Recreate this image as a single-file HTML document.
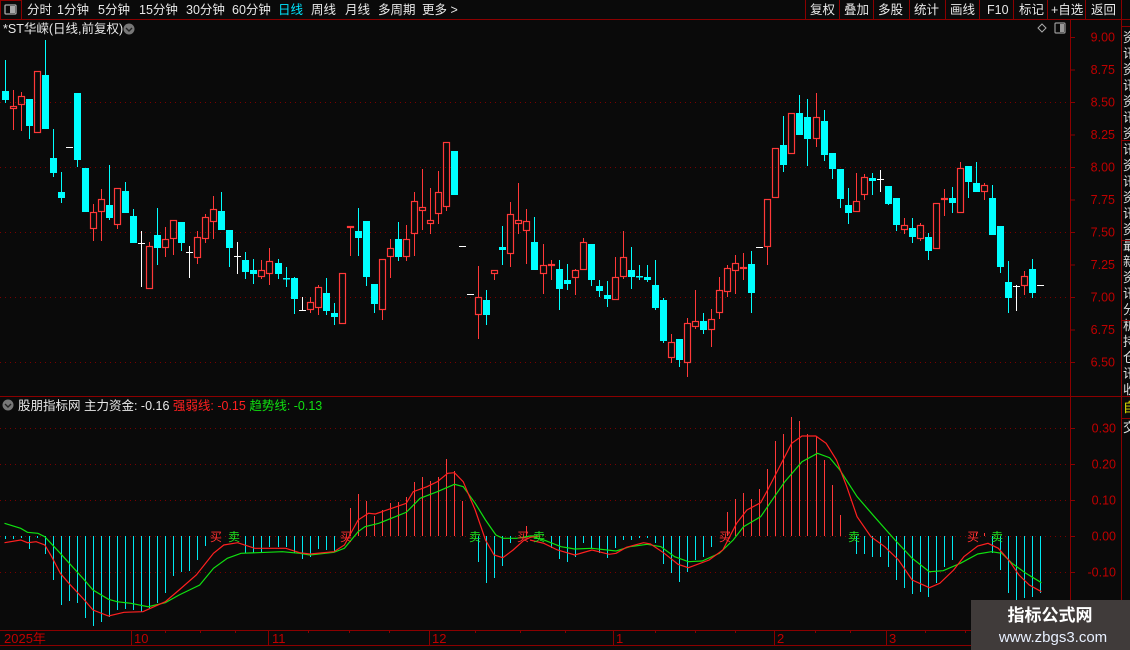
<!DOCTYPE html>
<html><head><meta charset="utf-8">
<style>
html,body{margin:0;padding:0;background:#0a0a0a;width:1130px;height:650px;overflow:hidden}
svg{display:block}
text{font-family:"Liberation Sans","Noto Sans CJK SC",sans-serif}
</style></head>
<body>
<svg id="s" width="1130" height="650" xmlns="http://www.w3.org/2000/svg">
<rect width="1130" height="650" fill="#0a0a0a"/>
<line x1="0" y1="19.5" x2="1130" y2="19.5" stroke="#8b0000"/>
<rect x="0.5" y="0.5" width="21" height="19" fill="none" stroke="#8b0000"/>
<rect x="5" y="5" width="11" height="9" fill="none" stroke="#aaa" stroke-width="1.3" rx="1"/>
<rect x="10" y="6" width="5" height="7" fill="#aaa"/>
<g font-size="12.5" fill="#e8e8e8">
<text x="27" y="14">分时</text><text x="57" y="14">1分钟</text><text x="98" y="14">5分钟</text>
<text x="139" y="14">15分钟</text><text x="186" y="14">30分钟</text><text x="232" y="14">60分钟</text>
<text x="278" y="14" fill="#00e5ff">日线</text><text x="311" y="14">周线</text><text x="345" y="14">月线</text>
<text x="378" y="14">多周期</text><text x="422" y="14">更多 &gt;</text>
<text x="810" y="14">复权</text><text x="844" y="14">叠加</text><text x="878" y="14">多股</text>
<text x="914" y="14">统计</text><text x="950" y="14">画线</text><text x="987" y="14">F10</text>
<text x="1019" y="14">标记</text><text x="1051" y="14">+自选</text><text x="1091" y="14">返回</text>
</g>
<g stroke="#8b0000"><line x1="805.5" y1="0" x2="805.5" y2="19"/><line x1="839.5" y1="0" x2="839.5" y2="19"/><line x1="873.5" y1="0" x2="873.5" y2="19"/><line x1="909.5" y1="0" x2="909.5" y2="19"/><line x1="945.5" y1="0" x2="945.5" y2="19"/><line x1="979.5" y1="0" x2="979.5" y2="19"/><line x1="1013.5" y1="0" x2="1013.5" y2="19"/><line x1="1047.5" y1="0" x2="1047.5" y2="19"/><line x1="1085.5" y1="0" x2="1085.5" y2="19"/><line x1="1121.5" y1="0" x2="1121.5" y2="19"/></g>
<text x="3" y="33" font-size="12.5" fill="#e8e8e8">*ST华嵘(日线,前复权)</text>
<circle cx="129" cy="29" r="5.5" fill="#777"/><path d="M126 28l3 3 3-3" stroke="#222" fill="none" stroke-width="1.4"/>
<path d="M1042 24l4 4-4 4-4-4z" fill="none" stroke="#aaa"/>
<rect x="1055" y="23" width="10" height="10" fill="none" stroke="#999" stroke-width="1.2" rx="1"/><rect x="1060" y="24" width="4" height="8" fill="#999"/>
<line x1="1070.5" y1="20" x2="1070.5" y2="645" stroke="#8b0000"/>
<line x1="1121.5" y1="20" x2="1121.5" y2="645" stroke="#8b0000"/>
<line x1="0" y1="396.5" x2="1121" y2="396.5" stroke="#8b0000"/>
<line x1="0" y1="630.5" x2="1130" y2="630.5" stroke="#8b0000"/>
<line x1="0" y1="645.5" x2="1130" y2="645.5" stroke="#8b0000"/>
<g id="grid"></g>
<g id="cd"></g>
<g id="ind"></g>
<circle cx="8" cy="405" r="5.5" fill="#777"/><path d="M5 404l3 3 3-3" stroke="#222" fill="none" stroke-width="1.4"/>
<text x="18" y="410" font-size="12.5" fill="#e8e8e8">股朋指标网 主力资金: -0.16 <tspan fill="#ff2020">强弱线: -0.15</tspan> <tspan fill="#10e010">趋势线: -0.13</tspan></text>
<g font-size="13" fill="#c00000">
<text x="4" y="643">2025年</text><text x="134" y="643">10</text><text x="272" y="643">11</text>
<text x="432" y="643">12</text><text x="616" y="643">1</text><text x="777" y="643">2</text><text x="889" y="643">3</text>
</g>
<g stroke="#8b0000"><line x1="131.5" y1="630" x2="131.5" y2="645"/><line x1="268.5" y1="630" x2="268.5" y2="645"/><line x1="429.5" y1="630" x2="429.5" y2="645"/><line x1="613.5" y1="630" x2="613.5" y2="645"/><line x1="774.5" y1="630" x2="774.5" y2="645"/><line x1="886.5" y1="630" x2="886.5" y2="645"/>
<line x1="165.5" y1="630" x2="165.5" y2="633"/><line x1="200.5" y1="630" x2="200.5" y2="633"/><line x1="235.5" y1="630" x2="235.5" y2="633"/><line x1="308.5" y1="630" x2="308.5" y2="633"/><line x1="349.5" y1="630" x2="349.5" y2="633"/><line x1="389.5" y1="630" x2="389.5" y2="633"/><line x1="475.5" y1="630" x2="475.5" y2="633"/><line x1="520.5" y1="630" x2="520.5" y2="633"/><line x1="565.5" y1="630" x2="565.5" y2="633"/><line x1="655.5" y1="630" x2="655.5" y2="633"/><line x1="695.5" y1="630" x2="695.5" y2="633"/><line x1="735.5" y1="630" x2="735.5" y2="633"/><line x1="815.5" y1="630" x2="815.5" y2="633"/><line x1="850.5" y1="630" x2="850.5" y2="633"/><line x1="925.5" y1="630" x2="925.5" y2="633"/><line x1="965.5" y1="630" x2="965.5" y2="633"/></g>
<g font-size="13" fill="#ddd">
<text x="1123" y="42">资</text><text x="1123" y="58">讯</text><text x="1123" y="74">资</text><text x="1123" y="90">讯</text><text x="1123" y="106">资</text><text x="1123" y="122">讯</text><text x="1123" y="138">资</text><text x="1123" y="154">讯</text><text x="1123" y="170">资</text><text x="1123" y="186">讯</text><text x="1123" y="202">资</text><text x="1123" y="218">讯</text><text x="1123" y="234">资</text><text x="1123" y="250">最</text><text x="1123" y="266">新</text><text x="1123" y="282">资</text><text x="1123" y="298">讯</text><text x="1123" y="314">分</text><text x="1123" y="330">析</text><text x="1123" y="346">持</text><text x="1123" y="362">仓</text><text x="1123" y="378">讯</text><text x="1123" y="394">收</text>
<text x="1123" y="412" fill="#e0e000">自</text><text x="1123" y="432">交</text>
</g>
<g stroke="#8b0000"><line x1="1121" y1="26.5" x2="1130" y2="26.5"/><line x1="1121" y1="140.5" x2="1130" y2="140.5"/><line x1="1121" y1="240.5" x2="1130" y2="240.5"/><line x1="1121" y1="320.5" x2="1130" y2="320.5"/><line x1="1121" y1="396.5" x2="1130" y2="396.5"/><line x1="1121" y1="418.5" x2="1130" y2="418.5"/></g>
<rect x="971" y="600" width="159" height="50" fill="#403b3a"/>
<text x="1050" y="621" font-size="17" font-weight="bold" fill="#fff" text-anchor="middle">指标公式网</text>
<text x="1053" y="642" font-size="15" fill="#e8f0ff" text-anchor="middle">www.zbgs3.com</text>
</svg>
<script>
var NS="http://www.w3.org/2000/svg";
function el(p,t,a){var e=document.createElementNS(NS,t);for(var k in a)e.setAttribute(k,a[k]);p.appendChild(e);return e;}
var g=document.getElementById('grid');
[102,167,232,297,362].forEach(function(y){el(g,'line',{x1:0,y1:y+.5,x2:1070,y2:y+.5,stroke:'#7a0000','stroke-dasharray':'1 4'});});
[428,464,500,536,572].forEach(function(y){el(g,'line',{x1:0,y1:y+.5,x2:1070,y2:y+.5,stroke:'#7a0000','stroke-dasharray':'1 4'});});
var pl=['9.00','8.75','8.50','8.25','8.00','7.75','7.50','7.25','7.00','6.75','6.50'];
pl.forEach(function(t,i){var y=37+i*32.5;el(g,'line',{x1:1070,y1:y+.5,x2:1075,y2:y+.5,stroke:'#8b0000'});var tx=el(g,'text',{x:1115,y:y+4.5,'font-size':'12.5',fill:'#c00000','text-anchor':'end'});tx.textContent=t;});
['0.30','0.20','0.10','0.00','-0.10'].forEach(function(t,i){var y=428+i*36;el(g,'line',{x1:1070,y1:y+.5,x2:1075,y2:y+.5,stroke:'#8b0000'});var tx=el(g,'text',{x:1116,y:y+4.5,'font-size':'12.5',fill:'#c00000','text-anchor':'end'});tx.textContent=t;});
var C=[['c',91,100,60,103],['r',106,109,90,130],['r',96,105,92,131],['c',99,126,99,139],['r',71,133],['c',75,129,40,129],['c',158,173,129,177],['c',192,198,172,203],['w',147,147],['c',93,160,93,167],
['c',168,212],['r',212,229,204,241],['r',199,212,189,241],['c',205,218,165,220],['r',188,225,188,229],['c',191,213,182,213],['c',216,243,209,243],['w',243,243,231,286],['r',246,289,242,289],['c',235,248,208,265],
['r',239,248,227,257],['r',220,239,220,255],['c',222,243,222,251],['w',252,252,246,277],['r',237,258,231,264],['r',217,239,214,243],['r',209,222,196,239],['c',211,230,192,230],['c',230,248,230,267],['w',256,256,242,273],
['c',260,272,252,279],['c',270,274,259,284],['r',270,277,260,279],['r',261,274,248,285],['c',263,274,259,279],['c',278,279,267,287],['c',278,299,277,314],['w',310,310,297,310],['r',302,310,297,313],['r',287,308,285,315],
['c',293,311,278,315],['c',313,317,303,325],['r',273,324],['r',226,228,226,256],['c',231,238,208,256],['c',221,277,221,286],['c',284,304,284,313],['r',259,310,259,320],['r',248,257,239,278],['c',239,257,222,261],
['r',239,257,225,261],['r',201,234,192,256],['r',207,211,169,230],['r',220,224,188,234],['r',192,214,171,224],['r',142,207,142,211],['c',151,195],['w',246,246],['w',294,294],['r',297,315,266,339],
['c',300,315,290,325],['r',270,274,270,280],['c',247,250,226,265],['r',214,254,202,267],['r',220,224,183,234],['r',221,231,209,264],['c',242,270,217,270],['r',265,274,244,294],['r',264,265,260,280],['c',269,289,260,310],
['c',280,284,264,290],['r',270,278,269,295],['r',242,270,238,270],['c',244,280,244,286],['c',286,291,280,297],['c',295,299,281,307],['r',277,300,257,300],['r',257,277,231,279],['c',270,277,247,289],['c',276,277,265,280],
['c',277,280,265,282],['c',285,308,260,310],['c',300,341,298,343],['r',342,358,334,363],['c',339,360,339,367],['r',323,363,318,377],['r',321,327,290,329],['c',321,330,313,334],['r',319,330,309,347],['r',290,313,277,319],
['r',268,292,265,297],['r',263,271,255,294],['r',267,269,253,280],['c',264,293,251,313],['w',247,247],['r',199,247,199,265],['r',148,198],['c',145,165,116,172],['r',113,154],['c',113,135,95,135],
['c',117,139,99,166],['r',117,139,93,147],['c',121,155,110,161],['c',153,169,153,179],['c',169,199,169,208],['c',205,213,188,224],['r',201,212,173,212],['r',177,195,174,200],['c',178,181,173,195],['w',179,179,170,191],
['c',186,204,186,205],['c',198,225,198,231],['r',225,230,218,234],['c',228,237,218,243],['r',225,239,223,241],['c',237,251,233,260],['r',203,249],['r',198,199,189,216],['c',198,203,187,213],['r',168,213,162,213],
['c',166,182,166,198],['c',183,192,162,192],['r',185,192,183,200],['c',198,235,185,235],['c',226,267,226,273],['c',282,298,261,313],['w',286,286,285,310],['r',276,286,271,295],['c',269,293,259,298],['w',285,285]];
var cd=document.getElementById('cd');
function X(i){return 4.5+i*8.03;}
C.forEach(function(c,i){var x=Math.round(X(i)),t=c[0],bt=c[1],bb=c[2],wt=c.length>3?c[3]:bt,wb=c.length>4?c[4]:bb;
 if(t=='w'){el(cd,'line',{x1:x+.5,y1:wt,x2:x+.5,y2:wb+1,stroke:'#fff'});el(cd,'line',{x1:x-3,y1:bt+.5,x2:x+4,y2:bt+.5,stroke:'#fff'});return;}
 if(t=='c'){el(cd,'line',{x1:x+.5,y1:wt,x2:x+.5,y2:wb,stroke:'#00ffff'});el(cd,'rect',{x:x-3,y:bt,width:7,height:Math.max(bb-bt,1.5),fill:'#00ffff'});}
 else{ if(wt<bt)el(cd,'line',{x1:x+.5,y1:wt,x2:x+.5,y2:bt,stroke:'#ff3838'}); if(wb>bb)el(cd,'line',{x1:x+.5,y1:bb,x2:x+.5,y2:wb,stroke:'#ff3838'});
  el(cd,'rect',{x:x-2.5,y:bt+.5,width:6,height:Math.max(bb-bt-1,1),fill:'none',stroke:'#ff3838','stroke-width':1.2});}
});
var ind=document.getElementById('ind');
var B={0:539,1:539,2:538,3:549,4:538,5:554,6:580,7:605,8:601,9:603,10:618,11:626,12:622,13:617,14:610,15:609,16:610,17:612,18:609,19:603,20:593,21:576,22:572,23:571,24:560,25:546,
30:553,31:553,32:553,33:547,34:547,35:547,36:553,37:559,38:557,39:549,40:550,41:552,43:508,44:494,45:501,46:516,47:510,48:503,49:502,50:497,51:482,52:477,53:481,54:477,55:459,56:471,57:501,
59:562,60:583,61:578,62:566,63:543,65:526,68:548,69:559,70:562,71:557,72:543,73:548,74:553,75:558,76:548,77:540,78:540,79:538,80:538,81:543,82:564,83:573,84:582,85:572,86:560,87:557,88:547,
90:512,91:499,92:493,93:499,94:489,95:469,96:441,97:434,98:417,99:421,100:434,101:437,102:460,103:485,104:515,106:554,107:554,108:557,109:557,110:567,111:580,112:588,113:594,114:592,115:597,116:583,117:567,118:560,121:533,122:533,123:553,124:570,125:593,126:600,127:598,128:597,129:593};
for(var k in B){var x=Math.round(X(+k))+.5,y=B[k];el(ind,'line',{x1:x,y1:536,x2:x,y2:y,stroke:y<536?'#ff3838':'#00e8f0'});}
function path(pts,ox){return pts.map(function(p,i){return (i?'L':'M')+(p[0]/2.904+ox).toFixed(1)+' '+(p[1]/3+410).toFixed(1);}).join('');}
var R1=[[13,398],[60,390],[80,398],[105,395],[130,405],[150,440],[175,490],[200,520],[245,570],[270,600],[315,618],[360,607],[415,605],[480,575],[520,540],[570,495],[620,430],[650,405],[690,398],[740,415],[830,415],[870,428],[900,432],[970,425],[1000,405],[1040,330],[1070,310],[1090,312],[1180,280],[1200,245],[1240,230],[1270,215],[1300,190],[1320,188],[1345,215],[1380,300],[1410,390],[1435,435],[1460,443],[1490,420],[1520,392],[1540,382],[1568,378]];
var G1=[[13,340],[60,355],[80,367],[110,370],[130,380],[175,430],[245,510],[270,540],[315,568],[340,575],[380,580],[430,590],[480,578],[520,555],[580,525],[620,475],[660,445],[700,430],[820,425],[870,430],[900,435],[970,427],[1000,415],[1040,365],[1060,350],[1100,340],[1180,307],[1220,265],[1270,245],[1320,223],[1345,230],[1380,280],[1410,330],[1440,375],[1460,385],[1500,385],[1540,378],[1568,378]];
var R2=[[0,390],[40,400],[80,420],[130,435],[180,420],[230,433],[250,430],[280,412],[330,398],[350,402],[390,430],[430,463],[460,473],[520,450],[560,420],[600,340],[630,300],[670,278],[690,240],[720,180],[760,100],[790,78],[830,78],[860,100],[890,150],[920,230],[950,320],[990,380],[1030,410],[1070,450],[1110,510],[1160,533],[1190,520],[1230,480],[1260,440],[1300,408],[1330,400],[1360,415],[1390,450],[1420,495],[1450,525],[1485,545]];
var G2=[[0,378],[40,390],[90,410],[130,417],[180,415],[250,423],[290,410],[340,403],[380,410],[420,440],[460,455],[500,453],[550,430],[590,390],[620,350],[670,320],[700,275],[740,215],[790,155],[835,130],[870,143],[900,180],[950,260],[1000,320],[1060,390],[1110,445],[1160,485],[1200,482],[1250,460],[1300,432],[1340,425],[1370,430],[1400,460],[1440,490],[1485,518]];
el(ind,'path',{d:path(G1,0)+path(G2,530),fill:'none',stroke:'#10e010','stroke-width':1.2});
el(ind,'path',{d:path(R1,0)+path(R2,530),fill:'none',stroke:'#ff2020','stroke-width':1.2});
[[210,'买','#ff3030'],[228,'卖','#20e020'],[340,'买','#ff3030'],[469,'卖','#20e020'],[517,'买','#ff3030'],[533,'卖','#20e020'],[719,'买','#ff3030'],[848,'卖','#20e020'],[967,'买','#ff3030'],[991,'卖','#20e020']].forEach(function(l){var t=el(ind,'text',{x:l[0],y:541,'font-size':12,fill:l[2]});t.textContent=l[1];});
</script>
</body></html>
